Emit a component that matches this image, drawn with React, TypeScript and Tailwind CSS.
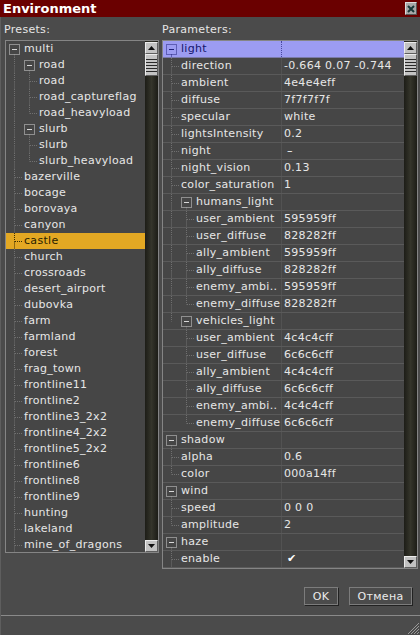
import React from 'react';

type TRow = {
  t: string;
  v?: string;
  col: number;
  pipes?: number[];
  pipesUp?: number[];
  box?: boolean;
  last?: boolean;
  sel?: boolean;
};

const tops = [
  'bazerville', 'bocage', 'borovaya', 'canyon', 'castle', 'church', 'crossroads', 'desert_airport',
  'dubovka', 'farm', 'farmland', 'forest', 'frag_town', 'frontline11', 'frontline2', 'frontline3_2x2',
  'frontline4_2x2', 'frontline5_2x2', 'frontline6', 'frontline8', 'frontline9', 'hunting', 'lakeland',
  'mine_of_dragons',
];

const presets: TRow[] = [
  { t: 'multi', col: 0, box: true },
  { t: 'road', col: 1, pipes: [0], box: true },
  { t: 'road', col: 1, pipes: [0] },
  { t: 'road_captureflag', col: 1, pipes: [0] },
  { t: 'road_heavyload', col: 1, pipes: [0], last: true },
  { t: 'slurb', col: 1, pipes: [0], box: true },
  { t: 'slurb', col: 1, pipes: [0] },
  { t: 'slurb_heavyload', col: 1, pipes: [0], last: true },
  ...tops.map((t) => ({ t, col: 0, sel: t === 'castle' })),
];

const params: TRow[] = [
  { t: 'light', col: 0, box: true, sel: true },
  { t: 'direction', v: '-0.664 0.07 -0.744', col: 0 },
  { t: 'ambient', v: '4e4e4eff', col: 0 },
  { t: 'diffuse', v: '7f7f7f7f', col: 0 },
  { t: 'specular', v: 'white', col: 0 },
  { t: 'lightsIntensity', v: '0.2', col: 0 },
  { t: 'night', v: '–', col: 0 },
  { t: 'night_vision', v: '0.13', col: 0 },
  { t: 'color_saturation', v: '1', col: 0 },
  { t: 'humans_light', col: 1, pipes: [0], box: true },
  { t: 'user_ambient', v: '595959ff', col: 1, pipes: [0] },
  { t: 'user_diffuse', v: '828282ff', col: 1, pipes: [0] },
  { t: 'ally_ambient', v: '595959ff', col: 1, pipes: [0] },
  { t: 'ally_diffuse', v: '828282ff', col: 1, pipes: [0] },
  { t: 'enemy_ambi..', v: '595959ff', col: 1, pipes: [0] },
  { t: 'enemy_diffuse', v: '828282ff', col: 1, pipes: [0], last: true },
  { t: 'vehicles_light', col: 1, pipesUp: [0], box: true },
  { t: 'user_ambient', v: '4c4c4cff', col: 1 },
  { t: 'user_diffuse', v: '6c6c6cff', col: 1 },
  { t: 'ally_ambient', v: '4c4c4cff', col: 1 },
  { t: 'ally_diffuse', v: '6c6c6cff', col: 1 },
  { t: 'enemy_ambi..', v: '4c4c4cff', col: 1 },
  { t: 'enemy_diffuse', v: '6c6c6cff', col: 1, last: true },
  { t: 'shadow', col: 0, box: true },
  { t: 'alpha', v: '0.6', col: 0 },
  { t: 'color', v: '000a14ff', col: 0, last: true },
  { t: 'wind', col: 0, box: true },
  { t: 'speed', v: '0 0 0', col: 0 },
  { t: 'amplitude', v: '2', col: 0, last: true },
  { t: 'haze', col: 0, box: true },
  { t: 'enable', v: '✔', col: 0 },
];

// one 15px column of tree lines / expander box
function Cell({ h, up, down, right, box, line, boxCol }: {
  h: number; up?: boolean; down?: boolean; right?: boolean; box?: boolean; line: string; boxCol: string;
}) {
  const mid = Math.floor(h / 2) + 0.5;
  return (
    <svg width={15} height={h} className="shrink-0">
      {up && <line x1={7.5} y1={0} x2={7.5} y2={mid} stroke={line} strokeDasharray="1 1" />}
      {down && <line x1={7.5} y1={box ? mid + 5 : mid} x2={7.5} y2={h} stroke={line} strokeDasharray="1 1" />}
      {right && <line x1={8} y1={mid} x2={15} y2={mid} stroke={line} strokeDasharray="1 1" />}
      {box && (
        <>
          <rect x={2.5} y={mid - 5} width={10} height={10} fill="none" stroke={boxCol} strokeDasharray="1 1" />
          <line x1={5} y1={mid} x2={10} y2={mid} stroke={boxCol} />
        </>
      )}
    </svg>
  );
}

function TreeCells({ r, h, dark }: { r: TRow; h: number; dark?: string }) {
  const line = dark ?? '#707070';
  const boxCol = dark ?? '#d8d8d8';
  const cells = [];
  for (let i = 0; i < r.col; i++) {
    const full = r.pipes?.includes(i);
    const half = r.pipesUp?.includes(i);
    cells.push(<Cell key={i} h={h} up={full || half} down={full} line={line} boxCol={boxCol} />);
  }
  if (r.box) cells.push(<Cell key="b" h={h} box down line={line} boxCol={boxCol} />);
  else cells.push(<Cell key="l" h={h} up down={!r.last} right line={line} boxCol={boxCol} />);
  return <>{cells}</>;
}

function ScrollBtn({ down }: { down?: boolean }) {
  return (
    <div className="h-[12px] shrink-0 bg-[#c2c2c2] border border-t-[#ececec] border-l-[#ececec] border-b-[#5e5e5e] border-r-[#5e5e5e] flex items-center justify-center">
      <svg width={7} height={4}>
        <polygon points={down ? '0,0 7,0 3.5,4' : '0,4 7,4 3.5,0'} fill="#111" />
      </svg>
    </div>
  );
}

function ScrollBar() {
  return (
    <div className="w-[13px] shrink-0 flex flex-col pt-[1px] bg-gradient-to-r from-[#1d1d17] via-[#35352b] to-[#1d1d17]">
      <ScrollBtn />
      <div className="h-[22px] shrink-0 bg-[#c4c4c4] border border-t-[#ececec] border-l-[#ececec] border-b-[#5e5e5e] border-r-[#5e5e5e] flex flex-col pt-[4px]">
        {[0, 1, 2, 3, 4].map((i) => (
          <div key={i} className="h-px mb-[2px] bg-[#2a2a2a]" />
        ))}
      </div>
      <div className="flex-1" />
      <ScrollBtn down />
    </div>
  );
}

export default function App() {
  return (
    <div className="w-[420px] h-[635px] bg-[#4b4b4b] flex flex-col overflow-hidden font-['DejaVu_Sans',sans-serif] text-[11px] tracking-[0.3px] text-[#e6e6e6]">
      {/* title bar */}
      <div className="h-[17px] shrink-0 bg-[#6a0000] flex items-center justify-between pl-[3px] pr-[3px]">
        <span className="text-[13px] font-bold tracking-normal text-white leading-none">Environment</span>
        <div className="w-[12px] h-[13px] bg-[#a8a8a8] border border-t-[#dcdcdc] border-l-[#dcdcdc] border-b-[#555] border-r-[#555] flex items-center justify-center">
          <svg width={8} height={8}>
            <path d="M1 1 L7 7 M7 1 L1 7" stroke="#183838" strokeWidth={2} />
          </svg>
        </div>
      </div>

      <div className="flex flex-1 flex-col border-l border-[#5e5e5e]">
        <div className="flex pl-[4px] gap-[3px]">
          {/* presets */}
          <div className="w-[154px] flex flex-col">
            <div className="h-[23px] flex items-end pb-[3px] ml-[-1px] leading-[14px]">Presets:</div>
            <div className="h-[513px] border border-[#858585] bg-[#464646] flex overflow-hidden">
              <div className="w-[139px] flex flex-col">
                {presets.map((r, i) => (
                  <div key={i} className={`h-[16px] shrink-0 flex items-center pl-[1px] ${r.sel ? 'bg-[#e3a823] text-[#2a1e00]' : ''}`}>
                    <TreeCells r={r} h={16} dark={r.sel ? '#3a2c00' : undefined} />
                    <span className="ml-[2px] whitespace-nowrap leading-[16px]">{r.t}</span>
                  </div>
                ))}
              </div>
              <ScrollBar />
            </div>
          </div>

          {/* parameters */}
          <div className="w-[256px] flex flex-col">
            <div className="h-[23px] flex items-end pb-[3px] leading-[14px]">Parameters:</div>
            <div className="h-[529px] border border-[#858585] bg-[#464646] flex overflow-hidden">
              <div className="w-[241px] flex flex-col">
                {params.map((r, i) => (
                  <div key={i} className={`h-[17px] shrink-0 flex border-b ${r.sel ? 'bg-[#9c9cf2] text-[#14146c] border-[#7a7aa8]' : 'border-[#5a5a5a]'}`}>
                    <div className={`w-[119px] shrink-0 flex items-center pl-[1px] overflow-hidden border-r ${r.sel ? 'border-dotted border-[#4848a0]' : 'border-[#525252]'}`}>
                      <TreeCells r={r} h={16} dark={r.sel ? '#20207a' : undefined} />
                      <span className="ml-[2px] whitespace-nowrap leading-[16px]">{r.t}</span>
                    </div>
                    <div className={`flex-1 pl-[2px] whitespace-nowrap leading-[16px] ${r.v === '✔' || r.v === '–' ? 'pl-[5px] text-white' : ''}`}>{r.v ?? ''}</div>
                  </div>
                ))}
              </div>
              <ScrollBar />
            </div>
          </div>
        </div>

        {/* footer */}
        <div className="flex justify-end gap-[11px] pr-[8px] pt-[18px]">
          <button className="h-[18px] w-[34px] border border-[#7c7c7c] shadow-[1px_1px_0_#222] bg-[#4b4b4b] leading-none text-[#ececec]">OK</button>
          <button className="h-[18px] w-[63px] border border-[#7c7c7c] shadow-[1px_1px_0_#222] bg-[#4b4b4b] leading-none text-[#ececec]">Отмена</button>
        </div>
        <div className="mt-[10px] h-px bg-[#8a8a8a]" />
        <div className="flex-1 flex justify-end items-end">
          <svg width={14} height={14}>
            <path d="M13 2 L2 13 M13 5 L5 13 M13 8 L8 13 M13 11 L11 13" stroke="#9a9a9a" strokeWidth={1} />
          </svg>
        </div>
      </div>
    </div>
  );
}
